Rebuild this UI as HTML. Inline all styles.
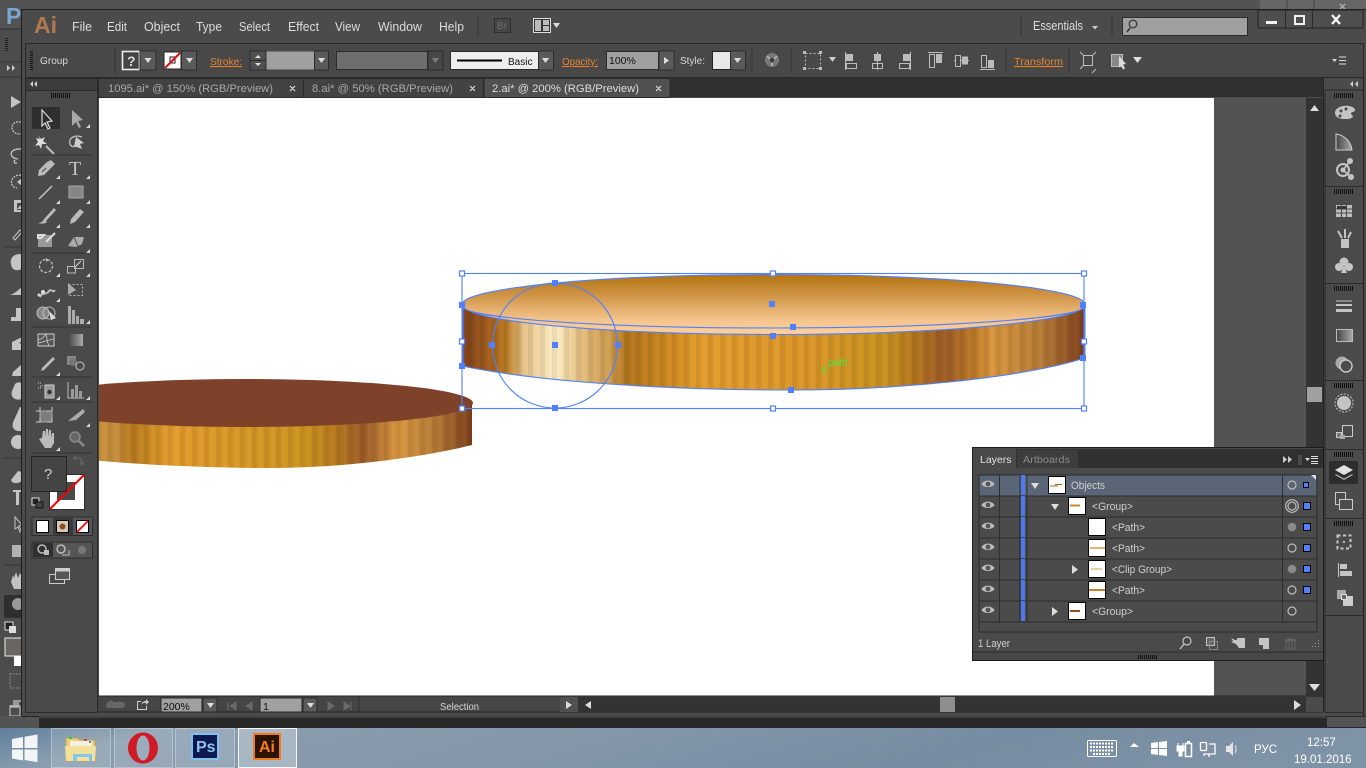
<!DOCTYPE html>
<html><head><meta charset="utf-8"><title>Illustrator</title>
<style>
html,body{margin:0;padding:0;background:#535353;width:1366px;height:768px;overflow:hidden}
svg{display:block;position:absolute;left:0;top:0}
text{font-family:"Liberation Sans",sans-serif;font-size:11px;fill:#d0d0d0}
.m{font-size:12.5px;fill:#dcdcdc}
.c{font-size:10.5px;fill:#d8d8d8}
.o{font-size:10.5px;fill:#e8842a;text-decoration:underline dotted}
.t{font-size:11px;fill:#a8a8a8}
.l{font-size:11px;fill:#cfcfcf}
.i{fill:#c4c4c4}
.s{fill:none;stroke:#c4c4c4;stroke-width:1.3}
.b{fill:#4f80ff}
.h{fill:#fff;stroke:#4f80ff;stroke-width:1.2}
.d{stroke:#333;stroke-width:1}
.line{stroke:#2e2e2e;stroke-width:1}
.eye{fill:#bdbdbd}
</style></head><body>
<svg width="1366" height="768" viewBox="0 0 1366 768" xmlns="http://www.w3.org/2000/svg">
<defs>
<linearGradient id="top" x1="0" y1="0" x2="0" y2="1"><stop offset="0" stop-color="#b4730f"/><stop offset=".35" stop-color="#cf9445"/><stop offset=".75" stop-color="#f4c48b"/><stop offset="1" stop-color="#fdd09c"/></linearGradient>
<linearGradient id="side" gradientUnits="userSpaceOnUse" x1="462" y1="0" x2="1085" y2="0">
<stop offset="0" stop-color="#7d3f1c"/><stop offset=".045" stop-color="#a55f1c"/><stop offset=".07" stop-color="#b87a20"/><stop offset=".1" stop-color="#e8c48a"/><stop offset=".15" stop-color="#fdedc4"/><stop offset=".19" stop-color="#e6c080"/><stop offset=".24" stop-color="#cb9a4c"/><stop offset=".265" stop-color="#b3751c"/><stop offset=".32" stop-color="#c98520"/><stop offset=".38" stop-color="#e39c2d"/><stop offset=".55" stop-color="#dc962a"/><stop offset=".68" stop-color="#c8921f"/><stop offset=".72" stop-color="#b97a1e"/><stop offset=".775" stop-color="#9c5c27"/><stop offset=".82" stop-color="#bd7826"/><stop offset=".85" stop-color="#d9963f"/><stop offset=".93" stop-color="#b67c37"/><stop offset="1" stop-color="#7d3f1c"/></linearGradient>
<linearGradient id="side2" gradientUnits="userSpaceOnUse" x1="99" y1="0" x2="472" y2="0">
<stop offset="0" stop-color="#c98f3a"/><stop offset=".04" stop-color="#c89040"/><stop offset=".09" stop-color="#b97a1e"/><stop offset=".19" stop-color="#e39c2d"/><stop offset=".55" stop-color="#cc9420"/><stop offset=".63" stop-color="#b97a1e"/><stop offset=".71" stop-color="#9c5c27"/><stop offset=".8" stop-color="#d9963f"/><stop offset=".9" stop-color="#b67c37"/><stop offset="1" stop-color="#7d3f1c"/></linearGradient>
<pattern id="st" width="12" height="10" patternUnits="userSpaceOnUse"><rect width="5" height="10" fill="#000" opacity=".07"/><rect x="8" width="1.5" height="10" fill="#fff" opacity=".04"/></pattern>
<linearGradient id="g1" x1="0" y1="0" x2="1" y2="0"><stop offset="0" stop-color="#444"/><stop offset="1" stop-color="#aaa"/></linearGradient>
<linearGradient id="tb" x1="0" y1="0" x2="1" y2=".1"><stop offset="0" stop-color="#5f7f9b"/><stop offset=".12" stop-color="#8a9eb0"/><stop offset=".45" stop-color="#8497aa"/><stop offset=".75" stop-color="#768ca2"/><stop offset="1" stop-color="#7f93a6"/></linearGradient>
<path id="eye" d="M-6.5 0C-4 -4.5 4 -4.5 6.5 0C4 4 -4 4 -6.5 0Z"/>
<path id="cor" d="M0 4L4 4L4 0Z" fill="#d8d8d8"/>
<g id="grip"><path d="M.5 0v5M2.500 0v5M4.500 0v5M6.500 0v5M8.500 0v5M10.500 0v5M12.500 0v5M14.500 0v5M16.500 0v5M18.500 0v5" stroke="#111" stroke-width="1"/></g>
</defs>

<!-- background PS window -->
<rect width="1366" height="768" fill="#535353"/>
<rect x="1260" y="0" width="106" height="10" fill="#666"/>
<path d="M1287 0v10M1314 0v10" stroke="#444"/>
<path d="M1340 4l5 5m0-5l-5 5" stroke="#aaa" stroke-width="1.5"/>
<text x="6" y="24" style="font-size:23px;font-weight:bold;fill:#7ba6d2">Ps</text>
<rect x="0" y="28" width="22" height="700" fill="#4c4c4c"/>
<path d="M0 29H22" stroke="#333"/>
<path d="M5 38.500h3M5 40.500h3M5 42.500h3M5 44.500h3M5 46.500h3M5 48.500h3M5 50.500h3" stroke="#222"/>
<path d="M0 62H22M0 77H22" stroke="#333"/>
<path d="M7 65l3 3-3 3zM12 65l3 3-3 3z" fill="#ccc"/>
<!-- PS tool fragments -->
<g class="i">
<path d="M11 96l10 6-10 6z"/>
<path d="M21 122c-12-2-12 13 0 12" fill="none" stroke="#c4c4c4" stroke-width="1.3" stroke-dasharray="2 1"/>
<path d="M21 149c-12-1-13 9-3 10M15 160c-2 2 0 4 2 3" fill="none" stroke="#c4c4c4" stroke-width="1.3"/>
<path d="M21 175c-12 0-12 12-4 13" fill="none" stroke="#c4c4c4" stroke-width="1.3" stroke-dasharray="2 1"/><path d="M17 182l5-4v8z"/>
<path d="M14 200h8v3h-5v7h5v2h-8v-12z"/><path d="M17 209l4-4v4z"/>
<path d="M13 238l7-8 2 2-7 8z" fill="none" stroke="#c4c4c4"/>
<path d="M20 254c-8 0-10 6-9 10 1 7 6 7 11 5v-15z"/>
<path d="M10 295c4-1 7-4 12-8v8z"/>
<path d="M16 308h6v13h-11v-4h5z"/>
<path d="M12 342l10-5v4l-3 2 3 1v6H12z"/>
<path d="M13 372l9-8v12h-10z"/>
<path d="M15 384c2-2 4-2 7-1v16c-6 2-12-1-10-8z"/>
<path d="M14 420l6-13h2v24c-7 1-12-3-8-11z"/>
<circle cx="18" cy="442" r="7"/>
<path d="M11 480l7-9 4 1v9c-4 3-10 3-11-1z"/>
<path d="M13 490h9v2h-3v13h-3v-13h-3z"/>
<path d="M15 517l7 8-3 1 3 6h-2l-2-5-3 2z" fill="none" stroke="#c4c4c4"/>
<rect x="12" y="545" width="10" height="12" opacity=".85"/>
<path d="M11 582l2-7 1 3 2-6 2 6 2-5 2 4v12h-8z"/>
</g>
<path d="M5 247h17M5 458h17M5 565h17" stroke="#333"/>
<rect x="4" y="595" width="18" height="23" rx="2" fill="#2f2f2f"/><circle cx="18" cy="604" r="6" fill="#999"/>
<rect x="5" y="622" width="8" height="8" fill="#222" stroke="#ddd"/><rect x="9" y="626" width="7" height="7" fill="#ddd"/>
<rect x="5" y="638" width="17" height="18" fill="#6b6662" stroke="#eee"/><rect x="14" y="656" width="8" height="10" fill="#fff"/>
<rect x="10" y="674" width="12" height="14" fill="none" stroke="#888" stroke-dasharray="2 1"/>
<path d="M10 708h9v-6h3v-2h-9v5h-3z" fill="#999"/><rect x="10" y="706" width="10" height="10" fill="none" stroke="#ccc"/>

<!-- AI window -->
<rect x="21.5" y="9.5" width="1345" height="707" fill="#4b4b4b" stroke="#1e1e1e"/>
<rect x="22" y="716" width="1344" height="12" fill="#292929"/>
<rect x="0" y="716" width="39" height="12" fill="#535353"/>
<rect x="1327" y="717" width="39" height="10" fill="#535353"/><path d="M39 717H1326" stroke="#565656"/>
<rect x="22" y="716" width="17" height="1" fill="#222"/>

<!-- Menu -->
<text x="34" y="33" style="font-size:23px;font-weight:bold;fill:#b27a52">Ai</text>
<text class="m" x="72" y="31" textLength="20" lengthAdjust="spacingAndGlyphs">File</text>
<text class="m" x="107" y="31" textLength="20" lengthAdjust="spacingAndGlyphs">Edit</text>
<text class="m" x="144" y="31" textLength="36" lengthAdjust="spacingAndGlyphs">Object</text>
<text class="m" x="196" y="31" textLength="26" lengthAdjust="spacingAndGlyphs">Type</text>
<text class="m" x="239" y="31" textLength="31" lengthAdjust="spacingAndGlyphs">Select</text>
<text class="m" x="288" y="31" textLength="31" lengthAdjust="spacingAndGlyphs">Effect</text>
<text class="m" x="335" y="31" textLength="25" lengthAdjust="spacingAndGlyphs">View</text>
<text class="m" x="378" y="31" textLength="44" lengthAdjust="spacingAndGlyphs">Window</text>
<text class="m" x="439" y="31" textLength="25" lengthAdjust="spacingAndGlyphs">Help</text>
<path d="M478 16v20" stroke="#333"/>
<rect x="494.5" y="18.5" width="16" height="14" fill="#454545" stroke="#2e2e2e"/>
<text x="497" y="29" style="font-size:10px;fill:#6e6e6e">Br</text>
<rect x="533.5" y="18.5" width="17" height="14" fill="#333" stroke="#ddd"/>
<rect x="535" y="20" width="6" height="11" fill="#bbb"/><rect x="543" y="20" width="6" height="5" fill="#bbb"/><rect x="543" y="26" width="6" height="5" fill="#bbb"/>
<path d="M553 23h7l-3.500 5z" fill="#ddd"/>
<path d="M1021 16v20M1112 16v20" stroke="#333"/>
<text class="m" x="1033" y="30" textLength="50" lengthAdjust="spacingAndGlyphs">Essentials</text>
<path d="M1092 26h6l-3 3.500z" fill="#ccc"/>
<rect x="1122.500" y="17.500" width="125" height="18" fill="#a0a0a0" stroke="#2c2c2c"/>
<circle cx="1133" cy="24" r="3.800" fill="none" stroke="#333" stroke-width="1.200"/><path d="M1130 28l-3 4" stroke="#333" stroke-width="1.500"/>
<!-- window controls -->
<path d="M1258 10h105v16q0 2-2 2H1260q-2 0-2-2z" fill="#4e4e4e" stroke="#222"/>
<path d="M1285.500 10v18M1312.500 10v18" stroke="#2a2a2a"/>
<rect x="1266" y="21" width="11" height="3" fill="#f0f0f0"/>
<rect x="1295" y="16" width="9" height="8" fill="none" stroke="#f0f0f0" stroke-width="2"/>
<path d="M1332 15l8 9m0-9l-8 9" stroke="#f4f4f4" stroke-width="2.400"/>

<!-- Control bar -->
<rect x="25.500" y="43.500" width="1338" height="34" fill="#484848" stroke="#2a2a2a"/>
<path d="M30 51.500h3M30 53.500h3M30 55.500h3M30 57.500h3M30 59.500h3M30 61.500h3M30 63.500h3M30 65.500h3M30 67.500h3M30 69.500h3" stroke="#161616"/>
<text class="c" x="40" y="64" textLength="28" lengthAdjust="spacingAndGlyphs">Group</text>
<path d="M115 48v25" stroke="#333"/>
<rect x="122.500" y="51.500" width="17" height="18" fill="#444" stroke="#eee" stroke-width="1.600"/>
<text x="127" y="66" style="font-size:14px;font-weight:bold;fill:#ddd">?</text>
<rect x="140" y="51" width="16" height="19" fill="#5a5a5a" stroke="#2c2c2c"/><path d="M144.500 58h7l-3.500 5z" fill="#ddd"/>
<rect x="164" y="52" width="17" height="17" fill="#fff" stroke="#222"/><rect x="170" y="57" width="5" height="6" fill="none" stroke="#222"/><path d="M165 68l15-15" stroke="#e01010" stroke-width="2"/>
<rect x="181.500" y="51" width="15" height="19" fill="#5a5a5a" stroke="#2c2c2c"/><path d="M186 58h7l-3.500 5z" fill="#ddd"/>
<text class="o" x="210" y="65" textLength="32" lengthAdjust="spacingAndGlyphs">Stroke:</text>
<rect x="250" y="51" width="16" height="19" fill="#505050" stroke="#2c2c2c"/><path d="M250 60.500h16" stroke="#2c2c2c"/><path d="M255 58l3-3 3 3zM255 63h6l-3 3z" fill="#ddd"/>
<rect x="266.500" y="51.500" width="48" height="18" fill="#a0a0a0"/>
<rect x="314.500" y="51" width="14" height="19" fill="#5a5a5a" stroke="#2c2c2c"/><path d="M318 58h7l-3.500 5z" fill="#ddd"/>
<rect x="336.500" y="51.500" width="91" height="18" fill="#6e6e6e" stroke="#2c2c2c"/>
<rect x="428" y="51" width="15" height="19" fill="#474747" stroke="#2c2c2c"/><path d="M432 58h7l-3.500 5z" fill="#7d7d7d"/>
<rect x="450.500" y="51.500" width="88" height="18" fill="#eee" stroke="#2c2c2c"/>
<path d="M457 60.500h45" stroke="#000" stroke-width="2"/>
<text x="508" y="65" style="font-size:10px;fill:#111">Basic</text>
<rect x="538.500" y="51" width="15" height="19" fill="#5a5a5a" stroke="#2c2c2c"/><path d="M542 58h7l-3.500 5z" fill="#ddd"/>
<text class="o" x="562" y="65" textLength="36" lengthAdjust="spacingAndGlyphs">Opacity:</text>
<rect x="606.500" y="51.500" width="52" height="18" fill="#a0a0a0" stroke="#2c2c2c"/>
<text x="609" y="64" style="font-size:10.500px;fill:#111">100%</text>
<rect x="659" y="51" width="15" height="19" fill="#5a5a5a" stroke="#2c2c2c"/><path d="M664 57l5 3.500-5 3.500z" fill="#ddd"/>
<text class="c" x="680" y="64" textLength="25" lengthAdjust="spacingAndGlyphs">Style:</text>
<rect x="712.500" y="51.500" width="18" height="18" fill="#e8e8e8" stroke="#222"/>
<rect x="730.500" y="51" width="15" height="19" fill="#5a5a5a" stroke="#2c2c2c"/><path d="M734 58h7l-3.500 5z" fill="#ddd"/>
<path d="M752 48v25M791 48v25" stroke="#333"/>
<circle cx="772" cy="60" r="7" fill="#777"/><circle cx="772" cy="60" r="2" fill="#333"/><path d="M767 56l3 3M777 56l-3 3M772 66v-3" stroke="#aaa" stroke-width="2"/>
<g fill="none" stroke="#bdbdbd">
<rect x="805.500" y="53.500" width="15" height="15" stroke-dasharray="2 2"/><rect x="803" y="51" width="3" height="3" fill="#bbb" stroke="none"/><rect x="819" y="51" width="3" height="3" fill="#bbb" stroke="none"/><rect x="803" y="67" width="3" height="3" fill="#bbb" stroke="none"/><rect x="819" y="67" width="3" height="3" fill="#bbb" stroke="none"/>
<path d="M845.500 52v18"/><rect x="846.500" y="54.500" width="6" height="6" fill="#bbb"/><rect x="846.500" y="63.500" width="10" height="5"/>
<path d="M877.500 52v18"/><rect x="874.500" y="54.500" width="6" height="6" fill="#bbb"/><rect x="872.500" y="63.500" width="10" height="5"/>
<path d="M910.500 52v18"/><rect x="903.500" y="54.500" width="6" height="6" fill="#bbb"/><rect x="899.500" y="63.500" width="10" height="5"/>
<path d="M928 52.500h15"/><rect x="929.500" y="54.500" width="5" height="13"/><rect x="936.500" y="54.500" width="5" height="8" fill="#bbb"/>
<path d="M954 60.500h15"/><rect x="955.500" y="55.500" width="5" height="11" fill="#484848"/><rect x="962.500" y="57" width="5" height="7" fill="#bbb"/>
<path d="M980 69.500h15"/><rect x="981.500" y="55.500" width="5" height="12"/><rect x="988.500" y="60.500" width="5" height="7" fill="#bbb"/>
<rect x="1083.500" y="55.500" width="9" height="10"/><path d="M1080 52l4 4M1096 52l-4 4M1080 69l4-4M1096 69l-4 4"/>
<rect x="1111.500" y="54.500" width="11" height="12" fill="#888" stroke="#bbb"/>
</g>
<path d="M829 57h7l-3.500 5z" fill="#ccc"/>
<path d="M1006 48v25M1069 48v25" stroke="#333"/>
<text class="o" x="1014" y="65" textLength="49" lengthAdjust="spacingAndGlyphs">Transform</text>
<path d="M1119 56l7 8-3 .5 2 4-2 1-2-4-2 2z" fill="#ddd"/>
<path d="M1133 57h9l-4.500 6z" fill="#ddd"/>
<path d="M1332 59h5l-2.500 3z" fill="#ddd"/><path d="M1339 57h7M1339 60.500h7M1339 64h7" stroke="#ddd"/>

<!-- Tab row -->
<rect x="98" y="78" width="1226" height="19" fill="#303030"/>
<rect x="98.500" y="78.500" width="205" height="19" fill="#424242" stroke="#2a2a2a"/>
<rect x="303.500" y="78.500" width="180" height="19" fill="#424242" stroke="#2a2a2a"/>
<rect x="484" y="78.500" width="186" height="19" fill="#505050" stroke="#2a2a2a"/>
<text class="t" x="108" y="92" textLength="165" lengthAdjust="spacingAndGlyphs">1095.ai* @ 150% (RGB/Preview)</text>
<text class="t" x="312" y="92" textLength="141" lengthAdjust="spacingAndGlyphs">8.ai* @ 50% (RGB/Preview)</text>
<text x="492" y="92" textLength="147" lengthAdjust="spacingAndGlyphs" style="fill:#dedede;font-size:11px">2.ai* @ 200% (RGB/Preview)</text>
<path d="M290 86l5 5m0-5l-5 5M470 86l5 5m0-5l-5 5M656 86l5 5m0-5l-5 5" stroke="#ddd" stroke-width="1.200"/>

<!-- Canvas -->
<rect x="99" y="98" width="1115" height="598" fill="#fff"/>
<rect x="1214" y="98" width="92" height="598" fill="#535353"/>

<!-- Coin 2 -->
<svg x="99" y="370" width="380" height="105" viewBox="99 370 380 105">
<path d="M17 403L472 402L472 445C420 458 340 468 270 468C180 468 80 462 17 450Z" fill="url(#side2)"/>
<path d="M17 403L472 402L472 445C420 458 340 468 270 468C180 468 80 462 17 450Z" fill="url(#st)"/>
<ellipse cx="245" cy="403" rx="228" ry="24" fill="#7e422b"/>
</svg>

<!-- Coin 1 -->
<path d="M462 305L1085 305L1085 358C1020 378 900 390 790 390C650 390 530 380 462 366Z" fill="url(#side)"/>
<path d="M462 305L1085 305L1085 358C1020 378 900 390 790 390C650 390 530 380 462 366Z" fill="url(#st)"/>
<ellipse cx="773.500" cy="304.500" rx="311.500" ry="30" fill="url(#top)"/>

<!-- selection -->
<g fill="none" stroke="#4f80ff" stroke-width="1.100">
<rect x="462" y="273.500" width="622" height="135"/>
<ellipse cx="773.500" cy="304.500" rx="311.500" ry="30"/>
<path d="M462 306A311.500 22 0 0 0 1085 306"/>
<path d="M462 366C530 380 650 390 790 390C900 390 1020 378 1085 358"/>
<path d="M462.500 305v61M1084.500 305v53" stroke-width="2"/>
<circle cx="555" cy="345.500" r="62.500"/>
</g>
<g class="b">
<rect x="552" y="280" width="6" height="6"/><rect x="489" y="342" width="6" height="6"/><rect x="552" y="342" width="6" height="6"/><rect x="615" y="342" width="6" height="6"/><rect x="552" y="405" width="6" height="6"/>
<rect x="769" y="301" width="6" height="6"/><rect x="790" y="324" width="6" height="6"/><rect x="770" y="333" width="6" height="6"/><rect x="788" y="387" width="6" height="6"/>
<rect x="459" y="302" width="6" height="6"/><rect x="1080" y="302" width="6" height="6"/><rect x="459" y="363" width="6" height="6"/><rect x="1080" y="355" width="6" height="6"/>
</g>
<g class="h">
<rect x="459.500" y="271" width="5" height="5"/><rect x="770.500" y="271" width="5" height="5"/><rect x="1081.500" y="271" width="5" height="5"/>
<rect x="459.500" y="339" width="5" height="5"/><rect x="1081.500" y="339" width="5" height="5"/>
<rect x="459.500" y="406" width="5" height="5"/><rect x="770.500" y="406" width="5" height="5"/><rect x="1081.500" y="406" width="5" height="5"/>
</g>
<text x="828" y="366" textLength="20" lengthAdjust="spacingAndGlyphs" style="font-size:11px;fill:#54e03c">path</text>
<text x="821" y="373" style="font-size:12px;fill:#54e03c">x</text>

<!-- Left toolbar -->
<rect x="25.500" y="78.500" width="72" height="634" fill="#4a4a4a" stroke="#2a2a2a"/>
<rect x="25.500" y="78.500" width="72" height="12" fill="#3c3c3c" stroke="#2a2a2a"/>
<path d="M29 81l-3 3 3 3zM33 81l-3 3 3 3z" fill="#ccc" transform="translate(4 0)"/>
<use href="#grip" x="51" y="93"/>
<rect x="32" y="107" width="28" height="22" fill="#2f2f2f"/>
<path d="M42 110v16l3-3 3 6 2-1-3-6 5-1z" fill="none" stroke="#ddd" stroke-width="1.200"/>
<path d="M72 110v16l4-4 3 6 2-1-3-6 5-1z" fill="#aaa"/>
<use href="#cor" x="86" y="124"/>
<!-- row 2 -->
<path d="M38 135l3 4 4-2-2 4 4 3-5 0-1 5-2-4-4 1 3-4-2-4 4 1z" fill="#ddd"/><path d="M46 146l8 8" stroke="#bbb" stroke-width="2"/>
<path d="M82 137c-8-3-14 2-12 7 1 3 4 3 6 2" fill="none" stroke="#bbb" stroke-width="1.400"/><path d="M76 137l8 6-4 1 2 5-8-3z" fill="#ccc"/>
<path d="M31 155H91M31 253H91M31 327H91M31 377H91M31 402H91M31 453H91" stroke="#333"/>
<!-- pen, T -->
<path d="M51 160l4 4-3 3-8 8-6 1 1-6 8-8z" fill="#bbb"/><path d="M42 172l4-4" stroke="#444"/>
<text x="69" y="175" style="font-family:'Liberation Serif',serif;font-size:20px;fill:#c4c4c4">T</text>
<use href="#cor" x="56" y="175"/><use href="#cor" x="86" y="175"/>
<!-- line rect -->
<path d="M39 199l13-13" stroke="#ccc" stroke-width="1.300"/><rect x="69" y="186" width="14" height="12" fill="#858585" stroke="#aaa"/>
<use href="#cor" x="56" y="200"/><use href="#cor" x="86" y="200"/>
<!-- brush pencil -->
<path d="M54 208l-10 11 2 2 10-11zM38 223c2 0 5-1 6-4l3 3c-2 2-6 2-9 1z" fill="#bbb"/>
<path d="M80 209l4 3-9 10-5 2 1-5z" fill="#bbb"/>
<use href="#cor" x="56" y="224"/><use href="#cor" x="86" y="224"/>
<!-- blob eraser -->
<path d="M38 235h14v12H38z" fill="#999"/><path d="M38 235h6l-3 3h-3zM46 242l9-9" stroke="#ddd" stroke-width="2" fill="none"/>
<path d="M68 246l6-9h10l-2 7-6 3z" fill="#aaa"/><path d="M74 237l4 9" stroke="#555"/>
<use href="#cor" x="86" y="249"/>
<!-- rotate scale -->
<circle cx="46" cy="266" r="6.500" fill="none" stroke="#bbb" stroke-width="1.300" stroke-dasharray="3 1.500"/>
<path d="M46 258l3 2-3 2z" fill="#bbb"/>
<rect x="74.500" y="259.500" width="9" height="9" fill="none" stroke="#bbb"/><rect x="67.500" y="266.500" width="8" height="6.500" fill="none" stroke="#bbb"/><path d="M76 266l5-5" stroke="#ddd"/>
<use href="#cor" x="56" y="273"/><use href="#cor" x="86" y="273"/>
<!-- width free transform -->
<path d="M40 297c3-6 6-1 9-6 3-3 3 3 6-1" fill="none" stroke="#bbb" stroke-width="2"/><circle cx="43" cy="292" r="2" fill="#ddd"/><circle cx="39" cy="295" r="1.500" fill="#ddd"/>
<rect x="68.500" y="284.500" width="14" height="11" fill="none" stroke="#bbb" stroke-dasharray="2 2"/><path d="M68 283l8 7-8 5z" fill="#aaa"/>
<use href="#cor" x="56" y="298"/>
<!-- shape builder, graph-->
<circle cx="43" cy="313" r="6" fill="#888" stroke="#bbb"/><circle cx="49" cy="313" r="6" fill="none" stroke="#bbb"/><path d="M49 311l7 7-5 2z" fill="#ddd"/>
<path d="M68 306h3v18h-3zM72 310h3v14h-3zM76 316h3v8h-3zM80 319h4v5h-4z" fill="#aaa"/>
<use href="#cor" x="86" y="320"/>
<!-- mesh gradient -->
<rect x="38" y="334" width="16" height="12" fill="#555" stroke="#ccc"/><path d="M38 340c5-1 6-4 8-6M46 334c1 4 1 8 3 12M38 343c6-1 10-3 16-4" stroke="#ccc" fill="none" stroke-width=".8"/>
<rect x="68" y="334" width="15" height="12" fill="url(#g1)"/>
<!-- eyedropper, blend -->
<path d="M53 357l2 2-3 3-8 8-3 1 1-3 8-8z" fill="#bbb"/>
<rect x="67" y="356" width="9" height="9" fill="#888"/><circle cx="73" cy="362" r="4" fill="#777"/><circle cx="80" cy="366" r="4" fill="none" stroke="#aaa" stroke-width="1.300"/>
<use href="#cor" x="56" y="372"/>
<!-- symbol sprayer, graph -->
<rect x="45" y="385" width="9" height="13" fill="#999" stroke="#ccc"/><circle cx="49.500" cy="392" r="2.200" fill="#333"/><path d="M38 383h4M40 386h4M38 388h3" stroke="#ccc" stroke-dasharray="1 1"/>
<path d="M68 382v16h16" fill="none" stroke="#bbb"/><path d="M71 389h3v9h-3zM75 385h3v13h-3zM79 391h3v7h-3z" fill="#999"/>
<use href="#cor" x="56" y="396"/><use href="#cor" x="86" y="396"/>
<!-- artboard, slice -->
<rect x="40" y="411" width="12" height="11" fill="#7d7d7d" stroke="#aaa"/><path d="M36 411h20M36 422h20M40 407v19M52 407v19" stroke="#ccc" stroke-dasharray="4 7"/>
<path d="M68 421l15-12 2 3-9 8z" fill="#aaa"/>
<use href="#cor" x="86" y="423"/>
<!-- hand zoom -->
<path d="M39 439l3-1 1-7 2 0 0 6 1-8 2 0 0 8 1-7 2 0 0 8 1-5 2 0 0 10-3 5h-6z" fill="#bbb"/>
<circle cx="75" cy="437" r="5" fill="#666" stroke="#888" stroke-width="1.500"/><path d="M79 441l5 5" stroke="#888" stroke-width="2.500"/>
<use href="#cor" x="56" y="447"/>
<!-- fill stroke -->
<rect x="49.500" y="474.500" width="35" height="35" fill="#fff" stroke="#2d2d2d"/>
<rect x="57" y="482" width="18" height="18" fill="#494949"/>
<path d="M50 509l34-34" stroke="#f00" stroke-width="2"/>
<rect x="31.500" y="456.500" width="35" height="35" fill="#444" stroke="#252525"/>
<text x="44" y="479" style="font-size:15px;fill:#cfcfcf">?</text>
<path d="M75 458c5-1 7 1 7 5M76 456l-2 2 2 2M80 462l2 3 2-3" fill="none" stroke="#666" stroke-width="1.200"/>
<rect x="32" y="498" width="7" height="7" fill="#222" stroke="#ddd"/><rect x="36" y="502" width="7" height="6" fill="#444" stroke="#111"/>
<!-- buttons -->
<rect x="32" y="517" width="60.500" height="18.500" fill="#555" stroke="#2d2d2d"/>
<rect x="53" y="517" width="20" height="18.500" fill="#3a3a3a"/>
<rect x="36.500" y="520.500" width="12" height="12" fill="#fff" stroke="#000"/>
<rect x="56.500" y="520.500" width="12" height="12" fill="#d8c8b8" stroke="#000"/><circle cx="62.500" cy="526.500" r="3" fill="#8a4e22"/>
<rect x="76.500" y="520.500" width="12" height="12" fill="#fff" stroke="#000"/><path d="M77 532l11-11" stroke="#f00" stroke-width="1.800"/>
<rect x="32" y="542" width="60.500" height="16" fill="#555" stroke="#2d2d2d"/><rect x="33" y="543" width="20" height="14" fill="#2f2f2f"/>
<circle cx="42" cy="549" r="4" fill="none" stroke="#bbb" stroke-width="1.500"/><rect x="44" y="550" width="5" height="5" fill="#bbb"/>
<circle cx="61" cy="549" r="4" fill="none" stroke="#bbb" stroke-width="1.500"/><path d="M62 555h7v-5" fill="none" stroke="#bbb"/>
<circle cx="82" cy="550" r="4" fill="#777"/>
<rect x="49.500" y="574.500" width="15" height="9" fill="none" stroke="#ccc"/>
<rect x="55.500" y="568.500" width="14" height="11" fill="#555" stroke="#ccc"/><rect x="55.500" y="568.500" width="14" height="3" fill="#ccc"/>

<!-- Status bar -->
<rect x="98" y="696" width="1226" height="16" fill="#454545"/>
<path d="M98 696H1324M98 712H1324" stroke="#252525"/>
<rect x="106" y="702" width="19" height="6" rx="3" fill="#6a6a6a"/><circle cx="111" cy="704" r="3.500" fill="#666"/><circle cx="120" cy="705" r="3.500" fill="#666"/>
<path d="M137 701h4v1h-3v7h8v-3h1v4h-10zM141 705c1-3 3-4 5-4v-2l3 3-3 3v-2c-2 0-4 0-5 2z" fill="#ccc"/>
<rect x="161" y="698" width="41" height="14" fill="#a0a0a0" stroke="#2a2a2a"/>
<text x="163" y="710" style="font-size:10.500px;fill:#111">200%</text>
<rect x="203" y="698" width="14" height="14" fill="#5a5a5a" stroke="#2a2a2a"/><path d="M207 703h7l-3.500 5z" fill="#ddd"/>
<path d="M228 702v8M236 702l-6 4 6 4zM252 702l-6 4 6 4z" fill="#6a6a6a" stroke="#6a6a6a"/>
<rect x="260" y="698" width="42" height="14" fill="#a0a0a0" stroke="#2a2a2a"/>
<text x="263" y="710" style="font-size:10.500px;fill:#111">1</text>
<rect x="303" y="698" width="14" height="14" fill="#5a5a5a" stroke="#2a2a2a"/><path d="M307 703h7l-3.500 5z" fill="#ddd"/>
<path d="M328 702l6 4-6 4zM344 702l6 4-6 4zM351 702v8" fill="#6a6a6a" stroke="#6a6a6a"/>
<path d="M359 697v15" stroke="#333"/>
<text class="c" x="440" y="710" textLength="39" lengthAdjust="spacingAndGlyphs">Selection</text>
<rect x="560" y="697" width="18" height="15" fill="#505050"/><path d="M566 701l6 4-6 4z" fill="#ddd"/>
<rect x="578" y="697" width="728" height="15" fill="#333"/>
<path d="M591 701l-6 4 6 4z" fill="#ddd"/>
<rect x="940" y="697" width="15" height="15" fill="#8e8e8e"/>
<path d="M1294 700l7 5-7 5z" fill="#ddd"/>
<rect x="1306" y="697" width="17" height="15" fill="#4b4b4b"/>

<!-- Vertical scrollbar -->
<rect x="1306" y="98" width="17" height="598" fill="#333"/>
<path d="M1310 111l4.500-6 4.500 6z" fill="#ddd"/>
<rect x="1307" y="387" width="15" height="15" fill="#a0a0a0"/>
<path d="M1309 684h11l-5.500 7z" fill="#ddd"/>
<path d="M1323.500 78v634" stroke="#252525"/>

<!-- Right dock -->
<rect x="1324" y="78" width="42" height="638" fill="#4b4b4b"/>
<path d="M1363.500 78v638" stroke="#222"/>
<path d="M1353 81l-3 3 3 3zM1358 81l-3 3 3 3z" fill="#ccc"/>
<path d="M1325 90H1363M1325 186.500H1363M1325 283.500H1363M1325 380.500H1363M1325 449.500H1363M1325 518.500H1363M1325 615.500H1363" stroke="#2a2a2a"/>
<path d="M1325 90v622" stroke="#2a2a2a"/><path d="M1325 712.500H1363" stroke="#2a2a2a"/>
<use href="#grip" x="1334" y="93"/><use href="#grip" x="1334" y="189"/><use href="#grip" x="1334" y="286"/><use href="#grip" x="1334" y="383"/><use href="#grip" x="1334" y="452"/><use href="#grip" x="1334" y="521"/>
<path d="M1335 113c0-6 9-8 14-7 6 1 8 5 4 6-3 0-2 3 0 4 0 3-5 3-9 3-5 0-9-2-9-6z" fill="#c4c4c4"/><circle cx="1341" cy="111" r="1.500" fill="#444"/><circle cx="1346" cy="109" r="1.500" fill="#444"/><circle cx="1340" cy="116" r="1.500" fill="#444"/>
<path d="M1336 134c8 1 15 7 16 16h-16z" fill="url(#g1)" stroke="#ccc"/>
<circle cx="1343" cy="170" r="6" fill="none" stroke="#c4c4c4" stroke-width="2"/><circle cx="1343" cy="170" r="2.500" fill="#c4c4c4"/><path d="M1343 170l7-9M1343 170l8 7" stroke="#c4c4c4" stroke-width="1.500"/><circle cx="1350" cy="161" r="3" fill="#c4c4c4"/><circle cx="1351" cy="177" r="3" fill="#c4c4c4"/>
<rect x="1336" y="205" width="16" height="12" fill="#bdbdbd"/><path d="M1341.500 205v12M1346.500 205v12M1336 209h16M1336 213h16" stroke="#4b4b4b"/><rect x="1337" y="206" width="4" height="3" fill="#333"/><rect x="1342" y="206" width="4" height="3" fill="#333"/>
<rect x="1341" y="239" width="8" height="9" fill="#c4c4c4"/><path d="M1342 238l-4-7M1345 238v-9M1348 238l3-6" stroke="#c4c4c4" stroke-width="2"/>
<circle cx="1344" cy="262" r="4.500" fill="#c4c4c4"/><circle cx="1339" cy="267" r="4" fill="#c4c4c4"/><circle cx="1349" cy="267" r="4" fill="#c4c4c4"/><path d="M1344 265l-3 8h6z" fill="#c4c4c4"/>
<path d="M1336 301h16" stroke="#c4c4c4"/><rect x="1336" y="304" width="16" height="2" fill="#c4c4c4"/><rect x="1336" y="309" width="16" height="3" fill="#c4c4c4"/>
<rect x="1336.500" y="329.500" width="16" height="12" fill="url(#g1)" stroke="#bbb"/>
<circle cx="1342" cy="363" r="6.500" fill="#aaa"/><circle cx="1346" cy="366" r="6" fill="#4b4b4b" stroke="#c4c4c4" stroke-width="1.500"/>
<circle cx="1344" cy="403" r="7" fill="#c4c4c4"/><circle cx="1344" cy="403" r="9" fill="none" stroke="#c4c4c4" stroke-dasharray="2 1.500"/>
<rect x="1342.500" y="425.500" width="10" height="11" fill="none" stroke="#ccc"/><rect x="1336.500" y="432.500" width="5" height="5" fill="#777" stroke="#ccc"/><rect x="1340" y="435" width="5" height="4" fill="#aaa"/>
<rect x="1329" y="461" width="29" height="23" rx="2" fill="#2e2e2e"/>
<path d="M1344 465l9 5-9 5-9-5z" fill="#e2e2e2"/><path d="M1336 474l8 4.500 8-4.500 1 1-9 5-9-5z" fill="#aaa"/>
<rect x="1335.500" y="492.500" width="10" height="12" fill="none" stroke="#ccc"/><rect x="1339.500" y="499.500" width="13" height="10" fill="#4b4b4b" stroke="#ccc"/>
<rect x="1337.500" y="535.500" width="13" height="13" fill="none" stroke="#c8c8c8" stroke-width="2" stroke-dasharray="3 2.500"/><circle cx="1344" cy="542" r="1" fill="#ddd"/>
<path d="M1338.500 563v14" stroke="#ccc"/><rect x="1340" y="564" width="7" height="5" fill="#c4c4c4"/><rect x="1340" y="571" width="12" height="5" fill="#c4c4c4"/>
<rect x="1337" y="590" width="9" height="9" fill="#aaa"/><rect x="1343" y="596" width="10" height="10" fill="#ccc"/><rect x="1341.500" y="594.500" width="5" height="5" fill="#666" stroke="#ddd"/>

<!-- Layers panel -->
<rect x="972.500" y="447.500" width="351" height="213" fill="#4a4a4a" stroke="#1c1c1c"/>
<rect x="973" y="449" width="350" height="19" fill="#303030"/>
<rect x="973" y="449" width="43" height="19" fill="#4a4a4a"/>
<rect x="1017" y="450" width="61" height="18" fill="#3d3d3d"/>
<text x="980" y="463" style="font-size:10.500px;fill:#e2e2e2">Layers</text>
<text x="1023" y="463" style="font-size:10.500px;fill:#8a8a8a" textLength="47" lengthAdjust="spacingAndGlyphs">Artboards</text>
<path d="M1283 456l4 3.500-4 3.500zM1288 456l4 3.500-4 3.500z" fill="#ccc"/><path d="M1299 455v10M1301 455v10" stroke="#666"/>
<path d="M1305 458h5l-2.500 3z" fill="#ddd"/><path d="M1311 456.500h7M1311 458.500h7M1311 461.500h7M1311 463.500h7" stroke="#ddd"/>
<!-- list -->
<rect x="979" y="475" width="338" height="157" fill="#4b4b4b" stroke="#2a2a2a"/>
<rect x="979.500" y="475.500" width="337" height="20" fill="#5a6575"/>
<g class="line">
<path d="M979 496H1317M979 517H1317M979 538H1317M979 559H1317M979 580H1317M979 601H1317M979 622H1317"/>
<path d="M999.500 475v147M1020 475v147M1027 475v147M1282.500 475v147"/>
</g>
<rect x="1021" y="475" width="4" height="146" fill="#4f78f0"/>
<path d="M1021 495.500h4M1021 516.500h4M1021 537.500h4M1021 558.500h4M1021 579.500h4M1021 600.500h4" stroke="#444"/>
<g class="eye">
<use href="#eye" x="988" y="484"/><use href="#eye" x="988" y="505"/><use href="#eye" x="988" y="526"/><use href="#eye" x="988" y="547"/><use href="#eye" x="988" y="568"/><use href="#eye" x="988" y="589"/><use href="#eye" x="988" y="610"/>
</g>
<g fill="#555"><circle cx="988" cy="484" r="2.400"/><circle cx="988" cy="505" r="2.400"/><circle cx="988" cy="526" r="2.400"/><circle cx="988" cy="547" r="2.400"/><circle cx="988" cy="568" r="2.400"/><circle cx="988" cy="589" r="2.400"/><circle cx="988" cy="610" r="2.400"/></g>
<!-- triangles -->
<path d="M1031 483h8l-4 6zM1051 504h8l-4 6z" fill="#ddd"/>
<path d="M1072 565l6 4.500-6 4.500zM1052 607l6 4.500-6 4.500z" fill="#ddd"/>
<!-- thumbs -->
<g fill="#fff" stroke="#000">
<rect x="1048.500" y="476.500" width="17" height="17"/>
<rect x="1068.500" y="497.500" width="17" height="17"/>
<rect x="1088.500" y="518.500" width="17" height="17"/>
<rect x="1088.500" y="539.500" width="17" height="17"/>
<rect x="1088.500" y="560.500" width="17" height="17"/>
<rect x="1088.500" y="581.500" width="17" height="17"/>
<rect x="1068.500" y="602.500" width="17" height="17"/>
</g>
<path d="M1050 486h8M1055 484.500h7" stroke="#a9641c"/>
<path d="M1070 505.500h10" stroke="#c88a2a" stroke-width="2"/>
<path d="M1090 548h15" stroke="#d99a40" stroke-width="1.500"/>
<path d="M1091 569h11" stroke="#eed0a8" stroke-width="2"/>
<path d="M1089 590h16" stroke="#c68426" stroke-width="2"/>
<path d="M1070 611h10" stroke="#8e4f22" stroke-width="2"/>
<text class="l" x="1071" y="489" textLength="34" lengthAdjust="spacingAndGlyphs">Objects</text>
<text class="l" x="1092" y="510" textLength="41" lengthAdjust="spacingAndGlyphs">&lt;Group&gt;</text>
<text class="l" x="1112" y="531" textLength="33" lengthAdjust="spacingAndGlyphs">&lt;Path&gt;</text>
<text class="l" x="1112" y="552" textLength="33" lengthAdjust="spacingAndGlyphs">&lt;Path&gt;</text>
<text class="l" x="1112" y="573" textLength="60" lengthAdjust="spacingAndGlyphs">&lt;Clip Group&gt;</text>
<text class="l" x="1112" y="594" textLength="33" lengthAdjust="spacingAndGlyphs">&lt;Path&gt;</text>
<text class="l" x="1092" y="615" textLength="41" lengthAdjust="spacingAndGlyphs">&lt;Group&gt;</text>
<!-- target circles -->
<g fill="none" stroke="#bdbdbd" stroke-width="1.200">
<circle cx="1292" cy="485" r="4"/>
<circle cx="1292" cy="506" r="4"/><circle cx="1292" cy="506" r="6.300"/>
<circle cx="1292" cy="548" r="4"/>
<circle cx="1292" cy="590" r="4"/>
<circle cx="1292" cy="611" r="4"/>
</g>
<circle cx="1292" cy="527" r="4.300" fill="#8a8a8a"/><circle cx="1292" cy="569" r="4.300" fill="#8a8a8a"/>
<g fill="#4f80ff" stroke="#000">
<rect x="1303.500" y="482.500" width="5" height="5"/>
<rect x="1303.500" y="502.500" width="7" height="7"/>
<rect x="1303.500" y="523.500" width="7" height="7"/>
<rect x="1303.500" y="544.500" width="7" height="7"/>
<rect x="1303.500" y="565.500" width="7" height="7"/>
<rect x="1303.500" y="586.500" width="7" height="7"/>
</g>
<path d="M1311 475h5v5z" fill="#ddd"/>
<!-- footer -->
<text class="l" x="978" y="647" textLength="32" lengthAdjust="spacingAndGlyphs">1 Layer</text>
<circle cx="1187" cy="641" r="4" fill="none" stroke="#c4c4c4" stroke-width="1.200"/><path d="M1184 644l-4 5" stroke="#c4c4c4" stroke-width="1.400"/>
<rect x="1206.500" y="637.500" width="8" height="8" fill="#666" stroke="#c4c4c4"/><rect x="1209.500" y="641.500" width="8" height="8" fill="none" stroke="#888"/>
<path d="M1231 638l4 2h2v-2h8v10h-6l-3-4-5-2 2-1z" fill="#c4c4c4"/>
<path d="M1259 638h10v11h-6v-4h-4z" fill="#c4c4c4"/>
<path d="M1285 640h11M1288 640v-1h5v1M1286 641h9v8h-9zM1289 642v6M1292 642v6" fill="none" stroke="#666"/>
<g fill="#999"><rect x="1318" y="640" width="1" height="1"/><rect x="1315" y="643" width="1" height="1"/><rect x="1318" y="643" width="1" height="1"/><rect x="1312" y="646" width="1" height="1"/><rect x="1315" y="646" width="1" height="1"/><rect x="1318" y="646" width="1" height="1"/></g>
<path d="M973 652H1323" stroke="#2a2a2a"/>
<rect x="973" y="653" width="350" height="7" fill="#474747"/>
<path d="M1138.500 655v4M1140.500 655v4M1142.500 655v4M1144.500 655v4M1146.500 655v4M1148.500 655v4M1150.500 655v4M1152.500 655v4M1154.500 655v4M1156.500 655v4" stroke="#111"/>

<!-- Taskbar -->
<rect x="0" y="728" width="1366" height="40" fill="url(#tb)"/>
<path d="M12 739l11-2v11H12zM24.500 736.800l13-2.300v13.500h-13zM12 749.500h11v11l-11-2zM24.500 749.500h13v12.700l-13-2.200z" fill="#f2f4f6"/>
<g fill="#fff" fill-opacity=".13" stroke="#fff" stroke-opacity=".35">
<rect x="51.500" y="728.500" width="59" height="39"/>
<rect x="114.500" y="728.500" width="58" height="39"/>
<rect x="175.500" y="728.500" width="59" height="39"/>
</g>
<rect x="238.500" y="728.500" width="58" height="39" fill="#fff" fill-opacity=".28" stroke="#fff" stroke-opacity=".9"/>
<!-- folder -->
<path d="M66 738h12l2 2h15v21H66z" fill="#e9cf7f" stroke="#b9a35e"/>
<path d="M70 741h22v12H70z" fill="#f5f0e0"/>
<rect x="69" y="737" width="3" height="2" fill="#37c837"/><rect x="84" y="739" width="3" height="2" fill="#c84a3a"/><rect x="89" y="741" width="2" height="2" fill="#3a90d8"/>
<path d="M65 746h31l-1 15H66z" fill="#f3e09a"/>
<path d="M73 761v-7h19v7h-3v-4H77v4z" fill="#7fc8ea"/>
<!-- opera -->
<ellipse cx="143" cy="748" rx="15" ry="15.500" fill="#d01a26"/><ellipse cx="143" cy="748" rx="6.500" ry="12.500" fill="#9aacbd"/>
<!-- Ps -->
<rect x="192" y="734" width="26" height="25" fill="#0c1a50" stroke="#80bfef" stroke-width="2"/>
<text x="196" y="752" style="font-size:16px;font-weight:bold;fill:#8cc4f0">Ps</text>
<!-- Ai -->
<rect x="254" y="734" width="26" height="25" fill="#2a1204" stroke="#f47a1c" stroke-width="2"/>
<text x="259" y="752" style="font-size:16px;font-weight:bold;fill:#f47a1c">Ai</text>
<!-- tray -->
<rect x="1087.500" y="740.500" width="29" height="16" rx="1" fill="none" stroke="#fff"/>
<path d="M1090 743.500h24M1090 747h24M1090 750.500h24M1093 754h18" stroke="#fff" stroke-width="2" stroke-dasharray="2 1"/>
<path d="M1130 747l4-4 5 4z" fill="#fff"/>
<path d="M1151 743l7-1v6h-7zM1159 742l8-1v7h-8zM1151 749h7v6l-7-1zM1159 749h8v7l-8-1z" fill="#fff"/>
<path d="M1177 746h7v5h-2v5h-3v-5h-2zM1178 743v3M1183 743v3" fill="#fff" stroke="#fff"/>
<rect x="1185.500" y="743.500" width="6" height="13" fill="none" stroke="#fff" stroke-width="1.500"/><rect x="1187" y="741" width="3" height="2" fill="#fff"/>
<rect x="1200.500" y="742.500" width="6" height="8" rx="1" fill="none" stroke="#fff" stroke-width="1.300"/>
<path d="M1209 744h6v10h-11v2M1209 754v3" fill="none" stroke="#fff" stroke-width="1.300"/>
<path d="M1226 746h3l4-4v14l-4-4h-3z" fill="#e6e6e6"/><path d="M1235 745c1.500 2 1.500 6 0 8" fill="none" stroke="#fff" opacity=".8"/>
<text x="1254" y="753" style="font-size:11.500px;fill:#fff">РУС</text>
<text x="1307" y="746" style="font-size:11.500px;fill:#fff">12:57</text>
<text x="1294" y="763" style="font-size:11.500px;fill:#fff">19.01.2016</text>
</svg>
</body></html>
